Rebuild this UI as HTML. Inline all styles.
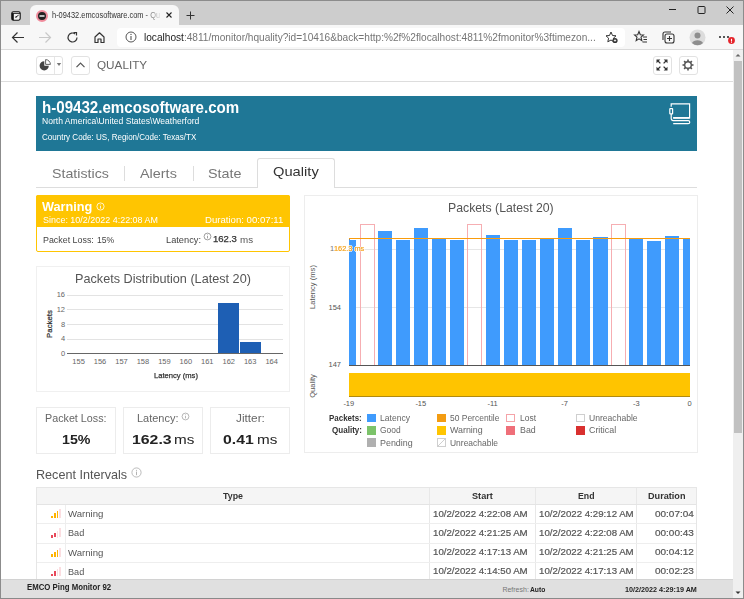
<!DOCTYPE html>
<html><head><meta charset="utf-8">
<style>
*{box-sizing:border-box;margin:0;padding:0}
html,body{width:744px;height:599px;overflow:hidden;background:#fff;font-family:"Liberation Sans",sans-serif;position:relative}
.a{position:absolute}
.t{position:absolute;white-space:nowrap;line-height:1;transform-origin:0 0}
</style></head><body>

<!-- window frame -->
<div class="a" style="left:0;top:0;width:744px;height:25px;background:#cdcdcd"></div>
<div class="a" style="left:0;top:0;width:744px;height:1px;background:#8c8c8c"></div>
<div class="a" style="left:0;top:0;width:1px;height:599px;background:#8c8c8c"></div>
<div class="a" style="left:743px;top:0;width:1px;height:599px;background:#8c8c8c"></div>
<!-- tab -->
<div class="a" style="left:30px;top:5px;width:149px;height:21px;background:#f7f7f7;border-radius:6px 6px 0 0"></div>
<svg class="a" style="left:10.5px;top:10.5px" width="10" height="10" viewBox="0 0 10 10"><rect x="0.8" y="0.8" width="8.4" height="8.4" rx="1.6" fill="#f2f2f2" stroke="#111" stroke-width="1.1"/><path d="M0.8 2.4H9.2" stroke="#111" stroke-width="0.9"/><rect x="0.8" y="2.4" width="2" height="6.8" fill="#111"/><path d="M4.6 6.2L7.6 4.2" stroke="#111" stroke-width="0.9"/><path d="M4.2 6.5L5.9 6.6L5.0 5.1Z" fill="#111"/></svg>
<svg class="a" style="left:36px;top:10px" width="12" height="12" viewBox="0 0 12 12"><circle cx="6" cy="6" r="5" fill="#222" stroke="#f08c9c" stroke-width="2"/><rect x="3.5" y="5.3" width="5" height="1.4" fill="#fff"/></svg>
<svg class="a" style="left:165.5px;top:12.2px" width="6" height="6" viewBox="0 0 6 6"><path d="M0.5 0.5L5.5 5.5M5.5 0.5L0.5 5.5" stroke="#222" stroke-width="1.1"/></svg>
<svg class="a" style="left:185.5px;top:10.5px" width="9" height="9" viewBox="0 0 9 9"><path d="M4.5 0.5V8.5M0.5 4.5H8.5" stroke="#333" stroke-width="1"/></svg>
<svg class="a" style="left:669px;top:4px" width="7" height="10" viewBox="0 0 7 10"><path d="M0 5.5H7" stroke="#222" stroke-width="1"/></svg>
<svg class="a" style="left:696.5px;top:6px" width="9" height="8" viewBox="0 0 9 8"><rect x="1" y="0.5" width="7" height="7" rx="0.8" fill="none" stroke="#222" stroke-width="1"/></svg>
<svg class="a" style="left:725.5px;top:6px" width="8" height="8" viewBox="0 0 8 8"><path d="M0.5 0.5L7.5 7.5M7.5 0.5L0.5 7.5" stroke="#222" stroke-width="1"/></svg>
<!-- toolbar -->
<div class="a" style="left:1px;top:25px;width:742px;height:24px;background:#f7f7f7"></div>
<div class="a" style="left:1px;top:49px;width:742px;height:1px;background:#dadada"></div>
<div class="a" style="left:117px;top:28px;width:508px;height:18.5px;background:#fff;border-radius:4px"></div>
<svg class="a" style="left:11px;top:31px" width="14" height="13" viewBox="0 0 14 13"><path d="M13 6.5H1.5M6.5 1.5L1.5 6.5L6.5 11.5" fill="none" stroke="#333" stroke-width="1.2"/></svg>
<svg class="a" style="left:38px;top:31px" width="14" height="13" viewBox="0 0 14 13"><path d="M1 6.5H12.5M7.5 1.5L12.5 6.5L7.5 11.5" fill="none" stroke="#c8c8c8" stroke-width="1.2"/></svg>
<svg class="a" style="left:66px;top:31px" width="13" height="13" viewBox="0 0 13 13"><path d="M11 6.5A4.5 4.5 0 1 1 9.2 2.9" fill="none" stroke="#333" stroke-width="1.2"/><path d="M7.5 1.5H10.5V4.5" fill="none" stroke="#333" stroke-width="1.2"/></svg>
<svg class="a" style="left:93px;top:31px" width="13" height="13" viewBox="0 0 13 13"><path d="M2 6L6.5 1.8L11 6V11.5H8V8H5V11.5H2Z" fill="none" stroke="#333" stroke-width="1.2" stroke-linejoin="round"/></svg>
<svg class="a" style="left:125px;top:31px" width="12" height="12" viewBox="0 0 12 12"><circle cx="6" cy="6" r="5" fill="none" stroke="#555" stroke-width="1"/><path d="M6 5V9" stroke="#555" stroke-width="1.1"/><circle cx="6" cy="3.4" r="0.7" fill="#555"/></svg>
<svg class="a" style="left:605px;top:31px" width="14" height="13" viewBox="0 0 14 13"><path d="M6 1L7.5 4.5L11 4.8L8.4 7.2L9.2 10.8L6 9L2.8 10.8L3.6 7.2L1 4.8L4.5 4.5Z" fill="none" stroke="#333" stroke-width="1"/><circle cx="10" cy="9.5" r="2.6" fill="#333"/><path d="M10 8.3V10.7M8.8 9.5H11.2" stroke="#fff" stroke-width="0.8"/></svg>
<svg class="a" style="left:633px;top:30px" width="15" height="14" viewBox="0 0 15 14"><path d="M6 1.5L7.3 4.7L10.5 5L8 7.2L8.8 10.6L6 8.8L3.2 10.6L4 7.2L1.5 5L4.7 4.7Z" fill="none" stroke="#333" stroke-width="1.1"/><path d="M10 7H14M10.5 9.5H14M9.5 12H14" stroke="#333" stroke-width="1"/></svg>
<svg class="a" style="left:661px;top:30px" width="15" height="15" viewBox="0 0 15 15"><rect x="4" y="4" width="9" height="9" rx="2" fill="none" stroke="#333" stroke-width="1.1"/><path d="M2 10V4A2 2 0 0 1 4 2H10" fill="none" stroke="#333" stroke-width="1.1"/><path d="M8.5 6V11M6 8.5H11" stroke="#333" stroke-width="1.1"/></svg>
<svg class="a" style="left:689px;top:29px" width="17" height="17" viewBox="0 0 17 17"><circle cx="8.5" cy="8.5" r="8" fill="#dcdcdc"/><circle cx="8.5" cy="6.5" r="3" fill="#8e8e8e"/><path d="M3 14A6 4.5 0 0 1 14 14A8 8 0 0 1 3 14Z" fill="#8e8e8e"/></svg>
<svg class="a" style="left:717px;top:32px" width="20" height="14" viewBox="0 0 20 14"><circle cx="3" cy="5" r="1" fill="#222"/><circle cx="7" cy="5" r="1" fill="#222"/><circle cx="11" cy="5" r="1" fill="#222"/><circle cx="14.5" cy="8.5" r="3.4" fill="#e5242b"/><path d="M14.5 6.8V9.6" stroke="#fff" stroke-width="1.1"/><circle cx="14.5" cy="10.6" r="0.5" fill="#fff"/></svg>

<!-- app toolbar -->
<div class="a" style="left:1px;top:81px;width:732px;height:1px;background:#dddddd"></div>
<div class="a" style="left:36px;top:56px;width:27px;height:18.5px;border:1px solid #e2e2e2;border-radius:3px"></div>
<div class="a" style="left:53.8px;top:57px;width:1px;height:16.5px;background:#e6e6e6"></div>
<svg class="a" style="left:38.3px;top:58px" width="14" height="14" viewBox="0 0 14 14"><path d="M6.3 3.2A4.6 4.6 0 1 0 10.8 7.7H6.3Z" fill="#444"/><path d="M7.6 1.6V6.4H12.4A4.8 4.8 0 0 0 7.6 1.6Z" fill="none" stroke="#555" stroke-width="0.9"/></svg>
<svg class="a" style="left:56px;top:62px" width="6" height="5" viewBox="0 0 6 5"><path d="M0.8 1H5.2L3 4Z" fill="#777"/></svg>
<div class="a" style="left:71px;top:56px;width:19px;height:18.5px;border:1px solid #e2e2e2;border-radius:3px"></div>
<svg class="a" style="left:75px;top:61px" width="11" height="8" viewBox="0 0 11 8"><path d="M1.5 6.2L5.5 2.2L9.5 6.2" fill="none" stroke="#555" stroke-width="1.2"/></svg>
<div class="a" style="left:652.5px;top:56px;width:19px;height:18.5px;border:1px solid #e2e2e2;border-radius:3px"></div>
<svg class="a" style="left:655px;top:58px" width="14" height="14" viewBox="0 0 14 14"><g fill="#333"><path d="M1.5 1.5H5.3L1.5 5.3Z"/><path d="M12.5 1.5H8.7L12.5 5.3Z"/><path d="M1.5 12.5H5.3L1.5 8.7Z"/><path d="M12.5 12.5H8.7L12.5 8.7Z"/></g><g stroke="#333" stroke-width="1.3"><path d="M3 3L5.4 5.4M11 3L8.6 5.4M3 11L5.4 8.6M11 11L8.6 8.6"/></g></svg>
<div class="a" style="left:678.5px;top:56px;width:19px;height:18.5px;border:1px solid #e2e2e2;border-radius:3px"></div>
<svg class="a" style="left:681px;top:58px" width="14" height="14" viewBox="0 0 14 14"><g fill="#555"><g transform="rotate(0 7 7)"><rect x="6.2" y="1.5" width="1.6" height="2.4"/><rect x="6.2" y="10.1" width="1.6" height="2.4"/></g><g transform="rotate(45 7 7)"><rect x="6.2" y="1.5" width="1.6" height="2.4"/><rect x="6.2" y="10.1" width="1.6" height="2.4"/></g><g transform="rotate(90 7 7)"><rect x="6.2" y="1.5" width="1.6" height="2.4"/><rect x="6.2" y="10.1" width="1.6" height="2.4"/></g><g transform="rotate(135 7 7)"><rect x="6.2" y="1.5" width="1.6" height="2.4"/><rect x="6.2" y="10.1" width="1.6" height="2.4"/></g></g><circle cx="7" cy="7" r="3.3" fill="none" stroke="#555" stroke-width="1.4"/></svg>

<!-- banner -->
<div class="a" style="left:36px;top:96px;width:661px;height:55px;background:#1f7796"></div>
<svg class="a" style="left:668px;top:102px" width="24" height="24" viewBox="0 0 24 24"><g fill="none" stroke="#fff" stroke-width="1.2"><path d="M3.2 4.8V1.8H21.6V15.9H5.2"/><path d="M3.2 12V16.6A2 2 0 0 0 5.2 18.6H20.2A1.55 1.55 0 0 1 20.2 21.7H5.2"/><rect x="1.8" y="6.6" width="2.8" height="5.2" rx="0.4"/></g><path d="M5.2 15.9H21.6" stroke="#fff" stroke-width="1.6"/></svg>

<!-- tabs -->
<div class="a" style="left:36px;top:187px;width:661px;height:1px;background:#dddddd"></div>
<div class="a" style="left:257px;top:158px;width:78px;height:30px;background:#fff;border:1px solid #dddddd;border-bottom:none;border-radius:3px 3px 0 0"></div>
<div class="a" style="left:124px;top:166px;width:1px;height:15px;background:#ddd"></div>
<div class="a" style="left:193px;top:166px;width:1px;height:15px;background:#ddd"></div>

<!-- warning box -->
<div class="a" style="left:36px;top:195px;width:254px;height:57px;border:1px solid #ffc501;border-radius:2px;background:#fff"></div>
<div class="a" style="left:36px;top:195px;width:254px;height:32px;background:#ffc501;border-radius:2px 2px 0 0"></div>

<!-- distribution chart box -->
<div class="a" style="left:36px;top:266px;width:254px;height:126px;border:1px solid #f0f0f0"></div>

<!-- stat boxes -->
<div class="a" style="left:36px;top:407px;width:80px;height:47px;border:1px solid #ececec"></div>
<div class="a" style="left:123px;top:407px;width:80px;height:47px;border:1px solid #ececec"></div>
<div class="a" style="left:210px;top:407px;width:80px;height:47px;border:1px solid #ececec"></div>

<!-- packets chart box -->
<div class="a" style="left:304px;top:195px;width:394px;height:258px;border:1px solid #ededed"></div>

<!-- recent intervals -->
<div class="a" style="left:36px;top:487px;width:661px;height:92px;border:1px solid #e6e6e6;border-bottom:none"></div>
<div class="a" style="left:37px;top:488px;width:659px;height:16px;background:#f5f5f5"></div>

<!-- status bar -->
<div class="a" style="left:1px;top:579px;width:732px;height:19px;background:#e0e0e0;border-top:1px solid #d2d2d2"></div>
<div class="a" style="left:0;top:597.5px;width:744px;height:1.5px;background:#8a8a8a"></div>
<!-- scrollbar -->
<div class="a" style="left:733px;top:50px;width:10px;height:548px;background:#efefef"></div>
<div class="a" style="left:734px;top:60.5px;width:8px;height:372px;background:#c1c1c1"></div>

<svg class="a" style="left:96px;top:202px" width="9" height="9" viewBox="0 0 9 9"><circle cx="4.5" cy="4.5" r="3.6" fill="none" stroke="#fff" stroke-width="0.8"/><path d="M4.5 3.8V6.6" stroke="#fff" stroke-width="0.8"/><circle cx="4.5" cy="2.7" r="0.45" fill="#fff"/></svg>
<svg class="a" style="left:202.5px;top:232px" width="9" height="9" viewBox="0 0 9 9"><circle cx="4.5" cy="4.5" r="3.4" fill="none" stroke="#777" stroke-width="0.7"/><path d="M4.5 3.8V6.4" stroke="#777" stroke-width="0.7"/><circle cx="4.5" cy="2.7" r="0.4" fill="#777"/></svg>
<svg class="a" style="left:181px;top:412px" width="9" height="9" viewBox="0 0 9 9"><circle cx="4.5" cy="4.5" r="3.4" fill="none" stroke="#999" stroke-width="0.7"/><path d="M4.5 3.8V6.4" stroke="#999" stroke-width="0.7"/><circle cx="4.5" cy="2.7" r="0.4" fill="#999"/></svg>
<svg class="a" style="left:131px;top:467px" width="11" height="11" viewBox="0 0 11 11"><circle cx="5.5" cy="5.5" r="4.6" fill="none" stroke="#aaa" stroke-width="0.8"/><path d="M5.5 4.6V8.2" stroke="#aaa" stroke-width="0.9"/><circle cx="5.5" cy="3.2" r="0.55" fill="#aaa"/></svg>
<svg class="a" style="left:734px;top:51px" width="8" height="8" viewBox="0 0 8 8"><path d="M1.5 5.5L4 3L6.5 5.5Z" fill="#666"/></svg>
<svg class="a" style="left:734px;top:588.5px" width="8" height="8" viewBox="0 0 8 8"><path d="M1.5 2.5L4 5L6.5 2.5Z" fill="#333"/></svg>
<div class="a" style="left:67.40px;top:294.50px;width:215.30px;height:1.00px;background:#e3e3e3"></div>
<div class="a" style="left:67.40px;top:309.30px;width:215.30px;height:1.00px;background:#e3e3e3"></div>
<div class="a" style="left:67.40px;top:323.80px;width:215.30px;height:1.00px;background:#e3e3e3"></div>
<div class="a" style="left:67.40px;top:338.50px;width:215.30px;height:1.00px;background:#e3e3e3"></div>
<div class="a" style="left:67.40px;top:353.00px;width:215.30px;height:1.30px;background:#666"></div>
<div class="a" style="left:218.40px;top:302.60px;width:21.00px;height:50.60px;background:#1e5fb4"></div>
<div class="a" style="left:239.80px;top:342.20px;width:21.40px;height:11.00px;background:#1e5fb4"></div>
<div class="t" style="left:50px;top:324px;font-size:7.8px;font-weight:normal;color:#333;-webkit-text-stroke:0.25px #333;transform:translate(-50%,-50%) rotate(-90deg);transform-origin:50% 50%">Packets</div>
<div class="a" style="left:349.20px;top:249.30px;width:341.00px;height:1.00px;background:#e6e6e6"></div>
<div class="a" style="left:349.20px;top:306.90px;width:341.00px;height:1.00px;background:#e6e6e6"></div>
<div class="a" style="left:349.20px;top:240.40px;width:7.05px;height:124.80px;background:#3f9bfd"></div>
<div class="a" style="left:360.00px;top:224.00px;width:15.00px;height:141.20px;border:1px solid #f6aeb2;border-bottom:none"></div>
<div class="a" style="left:378.05px;top:231.20px;width:14.10px;height:134.00px;background:#3f9bfd"></div>
<div class="a" style="left:396.00px;top:240.40px;width:14.10px;height:124.80px;background:#3f9bfd"></div>
<div class="a" style="left:413.95px;top:228.00px;width:14.10px;height:137.20px;background:#3f9bfd"></div>
<div class="a" style="left:431.90px;top:239.20px;width:14.10px;height:126.00px;background:#3f9bfd"></div>
<div class="a" style="left:449.85px;top:240.40px;width:14.10px;height:124.80px;background:#3f9bfd"></div>
<div class="a" style="left:467.00px;top:224.00px;width:15.00px;height:141.20px;border:1px solid #f6aeb2;border-bottom:none"></div>
<div class="a" style="left:485.75px;top:235.00px;width:14.10px;height:130.20px;background:#3f9bfd"></div>
<div class="a" style="left:503.70px;top:240.00px;width:14.10px;height:125.20px;background:#3f9bfd"></div>
<div class="a" style="left:521.65px;top:240.00px;width:14.10px;height:125.20px;background:#3f9bfd"></div>
<div class="a" style="left:539.60px;top:238.70px;width:14.10px;height:126.50px;background:#3f9bfd"></div>
<div class="a" style="left:557.55px;top:227.60px;width:14.10px;height:137.60px;background:#3f9bfd"></div>
<div class="a" style="left:575.50px;top:239.70px;width:14.10px;height:125.50px;background:#3f9bfd"></div>
<div class="a" style="left:593.45px;top:236.60px;width:14.10px;height:128.60px;background:#3f9bfd"></div>
<div class="a" style="left:611.00px;top:224.00px;width:15.00px;height:141.20px;border:1px solid #f6aeb2;border-bottom:none"></div>
<div class="a" style="left:629.35px;top:239.00px;width:14.10px;height:126.20px;background:#3f9bfd"></div>
<div class="a" style="left:647.30px;top:240.80px;width:14.10px;height:124.40px;background:#3f9bfd"></div>
<div class="a" style="left:665.25px;top:235.70px;width:14.10px;height:129.50px;background:#3f9bfd"></div>
<div class="a" style="left:683.20px;top:238.70px;width:7.10px;height:126.50px;background:#3f9bfd"></div>
<div class="a" style="left:348.70px;top:238.00px;width:1.00px;height:2.00px;background:#888"></div>
<div class="a" style="left:349.20px;top:365.20px;width:341.10px;height:1.00px;background:#555"></div>
<div class="a" style="left:349.20px;top:237.50px;width:341.10px;height:1.80px;background:#f99c0c"></div>
<div class="a" style="left:349.20px;top:373.00px;width:341.10px;height:24.00px;background:#ffc400"></div>
<div class="a" style="left:349.20px;top:396.40px;width:341.10px;height:1.00px;background:#b08a10"></div>
<div class="t" style="left:312.8px;top:287px;font-size:7.6px;color:#555;transform:translate(-50%,-50%) rotate(-90deg);transform-origin:50% 50%">Latency (ms)</div>
<div class="t" style="left:312.8px;top:385.8px;font-size:7.6px;color:#555;transform:translate(-50%,-50%) rotate(-90deg);transform-origin:50% 50%">Quality</div>
<div class="a" style="left:367.00px;top:413.70px;width:9.00px;height:8.80px;background:#3f9bfd"></div>
<div class="a" style="left:437.00px;top:413.70px;width:9.00px;height:8.80px;background:#f39c12"></div>
<div class="a" style="left:506.30px;top:413.70px;width:9.00px;height:8.80px;border:1px solid #f5a3a8;background:#fff"></div>
<div class="a" style="left:576.40px;top:413.70px;width:9.00px;height:8.80px;border:1px solid #cfcfcf;background:#fff"></div>
<div class="a" style="left:367.00px;top:425.90px;width:9.00px;height:8.80px;background:#7cc36a"></div>
<div class="a" style="left:437.00px;top:425.90px;width:9.00px;height:8.80px;background:#ffc501"></div>
<div class="a" style="left:506.30px;top:425.90px;width:9.00px;height:8.80px;background:#ef6f79"></div>
<div class="a" style="left:576.40px;top:425.90px;width:9.00px;height:8.80px;background:#d9302f"></div>
<div class="a" style="left:367.00px;top:438.30px;width:9.00px;height:8.80px;background:#b0b0b0"></div>
<svg class="a" style="left:437px;top:438.3px" width="9" height="9" viewBox="0 0 9 9"><rect x="0.5" y="0.5" width="8" height="8" fill="#fff" stroke="#cfcfcf"/><path d="M1 8L8 1" stroke="#cfcfcf"/></svg>
<div class="a" style="left:429.00px;top:488.00px;width:1.00px;height:91.00px;background:#e8e8e8"></div>
<div class="a" style="left:535.30px;top:488.00px;width:1.00px;height:91.00px;background:#e8e8e8"></div>
<div class="a" style="left:636.40px;top:488.00px;width:1.00px;height:91.00px;background:#e8e8e8"></div>
<div class="a" style="left:64.60px;top:504.00px;width:1.00px;height:75.00px;background:#eeeeee"></div>
<div class="a" style="left:37.00px;top:503.60px;width:659.00px;height:1.00px;background:#e4e4e4"></div>
<div class="a" style="left:37.00px;top:523.40px;width:659.00px;height:1.00px;background:#eeeeee"></div>
<div class="a" style="left:37.00px;top:542.80px;width:659.00px;height:1.00px;background:#eeeeee"></div>
<div class="a" style="left:37.00px;top:562.20px;width:659.00px;height:1.00px;background:#eeeeee"></div>
<div class="a" style="left:51.30px;top:515.70px;width:1.70px;height:2.50px;background:#ffb300"></div>
<div class="a" style="left:53.90px;top:513.40px;width:1.70px;height:4.80px;background:#ffb300"></div>
<div class="a" style="left:56.50px;top:511.20px;width:1.70px;height:7.00px;background:#ffb300"></div>
<div class="a" style="left:59.10px;top:509.00px;width:1.70px;height:9.20px;background:#fbdde0"></div>
<div class="a" style="left:51.30px;top:535.00px;width:1.70px;height:2.50px;background:#e8485a"></div>
<div class="a" style="left:53.90px;top:532.70px;width:1.70px;height:4.80px;background:#e8485a"></div>
<div class="a" style="left:56.50px;top:530.50px;width:1.70px;height:7.00px;background:#fbdde0"></div>
<div class="a" style="left:59.10px;top:528.30px;width:1.70px;height:9.20px;background:#fbdde0"></div>
<div class="a" style="left:51.30px;top:554.30px;width:1.70px;height:2.50px;background:#ffb300"></div>
<div class="a" style="left:53.90px;top:552.00px;width:1.70px;height:4.80px;background:#ffb300"></div>
<div class="a" style="left:56.50px;top:549.80px;width:1.70px;height:7.00px;background:#ffb300"></div>
<div class="a" style="left:59.10px;top:547.60px;width:1.70px;height:9.20px;background:#fbdde0"></div>
<div class="a" style="left:51.30px;top:573.60px;width:1.70px;height:2.50px;background:#e8485a"></div>
<div class="a" style="left:53.90px;top:571.30px;width:1.70px;height:4.80px;background:#e8485a"></div>
<div class="a" style="left:56.50px;top:569.10px;width:1.70px;height:7.00px;background:#fbdde0"></div>
<div class="a" style="left:59.10px;top:566.90px;width:1.70px;height:9.20px;background:#fbdde0"></div>
<div class="t" style="left:52.48px;top:11.46px;font-size:8.6px;font-weight:normal;color:#333;transform:scaleX(0.8632);-webkit-mask-image:linear-gradient(90deg,#000 85%,rgba(0,0,0,0.15));">h-09432.emcosoftware.com - Qu</div>
<div class="t" style="left:144.39px;top:32.93px;font-size:10.2px;font-weight:normal;color:#757575;transform:scaleX(0.9929);"><span style="color:#1a1a1a">localhost</span>:4811/monitor/hquality?id=10416&amp;back=http:%2f%2flocalhost:4811%2fmonitor%3ftimezon...</div>
<div class="t" style="left:96.52px;top:59.54px;font-size:11.4px;font-weight:normal;color:#666;transform:scaleX(1.0291);">QUALITY</div>
<div class="t" style="left:41.74px;top:100.42px;font-size:16px;font-weight:bold;color:#fff;transform:scaleX(0.9437);">h-09432.emcosoftware.com</div>
<div class="t" style="left:42.17px;top:116.70px;font-size:8.8px;font-weight:normal;color:#fff;transform:scaleX(0.9732);">North America\United States\Weatherford</div>
<div class="t" style="left:42.18px;top:132.56px;font-size:8.6px;font-weight:normal;color:#fff;transform:scaleX(0.9346);">Country Code: US, Region/Code: Texas/TX</div>
<div class="t" style="left:51.78px;top:166.71px;font-size:13.6px;font-weight:normal;color:#777;transform:scaleX(1.0449);">Statistics</div>
<div class="t" style="left:139.98px;top:166.71px;font-size:13.6px;font-weight:normal;color:#777;transform:scaleX(1.0599);">Alerts</div>
<div class="t" style="left:208.18px;top:166.71px;font-size:13.6px;font-weight:normal;color:#777;transform:scaleX(1.0561);">State</div>
<div class="t" style="left:272.68px;top:164.91px;font-size:13.6px;font-weight:normal;color:#333;transform:scaleX(1.0808);">Quality</div>
<div class="t" style="left:42.36px;top:200.79px;font-size:12.3px;font-weight:bold;color:#fff;transform:scaleX(1.0337);">Warning</div>
<div class="t" style="left:42.56px;top:215.73px;font-size:9px;font-weight:normal;color:#fff;transform:scaleX(0.9947);">Since: 10/2/2022 4:22:08 AM</div>
<div class="t" style="left:204.66px;top:215.73px;font-size:9px;font-weight:normal;color:#fff;transform:scaleX(1.0666);">Duration: 00:07:11</div>
<div class="t" style="left:42.57px;top:235.50px;font-size:8.8px;font-weight:normal;color:#444;transform:scaleX(1.0095);">Packet Loss:</div>
<div class="t" style="left:97.27px;top:235.50px;font-size:8.8px;font-weight:normal;color:#444;transform:scaleX(0.9799);">15%</div>
<div class="t" style="left:166.07px;top:235.50px;font-size:8.8px;font-weight:normal;color:#444;transform:scaleX(1.0508);">Latency:</div>
<div class="t" style="left:213.46px;top:235.33px;font-size:9px;font-weight:normal;color:#333;transform:scaleX(1.0599);-webkit-text-stroke:0.25px #333;">162.3</div>
<div class="t" style="left:240.07px;top:235.50px;font-size:8.8px;font-weight:normal;color:#555;transform:scaleX(1.1126);">ms</div>
<div class="t" style="left:74.84px;top:272.94px;font-size:12.6px;font-weight:normal;color:#555;transform:scaleX(1.0052);">Packets Distribution (Latest 20)</div>
<div class="t" style="left:56.71px;top:291.38px;font-size:7.5px;font-weight:normal;color:#666;">16</div>
<div class="t" style="left:56.71px;top:306.18px;font-size:7.5px;font-weight:normal;color:#666;">12</div>
<div class="t" style="left:60.88px;top:320.68px;font-size:7.5px;font-weight:normal;color:#666;">8</div>
<div class="t" style="left:60.88px;top:335.38px;font-size:7.5px;font-weight:normal;color:#666;">4</div>
<div class="t" style="left:60.88px;top:349.88px;font-size:7.5px;font-weight:normal;color:#666;">0</div>
<div class="t" style="left:72.34px;top:358.38px;font-size:7.5px;font-weight:normal;color:#666;">155</div>
<div class="t" style="left:93.79px;top:358.38px;font-size:7.5px;font-weight:normal;color:#666;">156</div>
<div class="t" style="left:115.24px;top:358.38px;font-size:7.5px;font-weight:normal;color:#666;">157</div>
<div class="t" style="left:136.69px;top:358.38px;font-size:7.5px;font-weight:normal;color:#666;">158</div>
<div class="t" style="left:158.14px;top:358.38px;font-size:7.5px;font-weight:normal;color:#666;">159</div>
<div class="t" style="left:179.59px;top:358.38px;font-size:7.5px;font-weight:normal;color:#666;">160</div>
<div class="t" style="left:201.04px;top:358.38px;font-size:7.5px;font-weight:normal;color:#666;">161</div>
<div class="t" style="left:222.49px;top:358.38px;font-size:7.5px;font-weight:normal;color:#666;">162</div>
<div class="t" style="left:243.94px;top:358.38px;font-size:7.5px;font-weight:normal;color:#666;">163</div>
<div class="t" style="left:265.39px;top:358.38px;font-size:7.5px;font-weight:normal;color:#666;">164</div>
<div class="t" style="left:153.53px;top:372.03px;font-size:7.8px;font-weight:normal;color:#333;transform:scaleX(0.9750);-webkit-text-stroke:0.25px #333;">Latency (ms)</div>
<div class="t" style="left:45.39px;top:414.13px;font-size:10.2px;font-weight:normal;color:#666;transform:scaleX(1.0548);">Packet Loss:</div>
<div class="t" style="left:62.22px;top:432.91px;font-size:13px;font-weight:bold;color:#222;transform:scaleX(1.0933);">15%</div>
<div class="t" style="left:137.19px;top:414.13px;font-size:10.2px;font-weight:normal;color:#666;transform:scaleX(1.0755);">Latency:</div>
<div class="t" style="left:131.92px;top:432.91px;font-size:13px;font-weight:bold;color:#222;transform:scaleX(1.2186);">162.3</div>
<div class="t" style="left:174.42px;top:432.91px;font-size:13px;font-weight:normal;color:#222;transform:scaleX(1.1739);">ms</div>
<div class="t" style="left:235.69px;top:414.13px;font-size:10.2px;font-weight:normal;color:#666;transform:scaleX(1.1606);">Jitter:</div>
<div class="t" style="left:222.82px;top:432.91px;font-size:13px;font-weight:bold;color:#222;transform:scaleX(1.2113);">0.41</div>
<div class="t" style="left:256.82px;top:432.91px;font-size:13px;font-weight:normal;color:#222;transform:scaleX(1.1739);">ms</div>
<div class="t" style="left:448.04px;top:202.34px;font-size:12.6px;font-weight:normal;color:#555;transform:scaleX(0.9743);">Packets (Latest 20)</div>
<div class="t" style="left:328.53px;top:303.77px;font-size:7.5px;font-weight:normal;color:#555;">154</div>
<div class="t" style="left:328.53px;top:361.38px;font-size:7.5px;font-weight:normal;color:#555;">147</div>
<div class="t" style="left:329.88px;top:245.28px;font-size:7.5px;font-weight:normal;color:#777;">1</div>
<div class="t" style="left:334.23px;top:245.03px;font-size:7.8px;font-weight:normal;color:#f5a21a;transform:scaleX(0.9426);text-shadow:-0.8px 0 #fff,0.8px 0 #fff,0 -0.8px #fff,0 0.8px #fff;-webkit-text-stroke:0.2px #f5a21a;">162.3 ms</div>
<div class="t" style="left:343.38px;top:400.27px;font-size:7.5px;font-weight:normal;color:#555;">-19</div>
<div class="t" style="left:415.38px;top:400.27px;font-size:7.5px;font-weight:normal;color:#555;">-15</div>
<div class="t" style="left:487.45px;top:400.27px;font-size:7.5px;font-weight:normal;color:#555;">-11</div>
<div class="t" style="left:561.26px;top:400.27px;font-size:7.5px;font-weight:normal;color:#555;">-7</div>
<div class="t" style="left:632.96px;top:400.27px;font-size:7.5px;font-weight:normal;color:#555;">-3</div>
<div class="t" style="left:687.51px;top:400.27px;font-size:7.5px;font-weight:normal;color:#555;">0</div>
<div class="t" style="left:328.90px;top:413.93px;font-size:8.4px;font-weight:bold;color:#333;transform:scaleX(0.9493);">Packets:</div>
<div class="t" style="left:331.60px;top:426.13px;font-size:8.4px;font-weight:bold;color:#333;transform:scaleX(0.9622);">Quality:</div>
<div class="t" style="left:380.00px;top:413.93px;font-size:8.4px;font-weight:normal;color:#666;transform:scaleX(1.0226);">Latency</div>
<div class="t" style="left:449.90px;top:413.93px;font-size:8.4px;font-weight:normal;color:#666;transform:scaleX(1.0106);">50 Percentile</div>
<div class="t" style="left:519.50px;top:413.93px;font-size:8.4px;font-weight:normal;color:#666;transform:scaleX(1.0104);">Lost</div>
<div class="t" style="left:588.80px;top:413.93px;font-size:8.4px;font-weight:normal;color:#666;transform:scaleX(1.0233);">Unreachable</div>
<div class="t" style="left:380.00px;top:426.13px;font-size:8.4px;font-weight:normal;color:#666;transform:scaleX(1.0053);">Good</div>
<div class="t" style="left:449.90px;top:426.13px;font-size:8.4px;font-weight:normal;color:#666;transform:scaleX(1.0594);">Warning</div>
<div class="t" style="left:519.50px;top:426.13px;font-size:8.4px;font-weight:normal;color:#666;transform:scaleX(1.0538);">Bad</div>
<div class="t" style="left:588.80px;top:426.13px;font-size:8.4px;font-weight:normal;color:#666;transform:scaleX(1.0592);">Critical</div>
<div class="t" style="left:380.00px;top:438.53px;font-size:8.4px;font-weight:normal;color:#666;transform:scaleX(1.0637);">Pending</div>
<div class="t" style="left:449.90px;top:438.53px;font-size:8.4px;font-weight:normal;color:#666;transform:scaleX(1.0107);">Unreachable</div>
<div class="t" style="left:35.72px;top:467.71px;font-size:13px;font-weight:normal;color:#555;transform:scaleX(0.9694);">Recent Intervals</div>
<div class="t" style="left:223.00px;top:491.93px;font-size:8.4px;font-weight:bold;color:#333;transform:scaleX(1.0565);">Type</div>
<div class="t" style="left:472.00px;top:491.93px;font-size:8.4px;font-weight:bold;color:#333;transform:scaleX(1.0898);">Start</div>
<div class="t" style="left:577.80px;top:491.93px;font-size:8.4px;font-weight:bold;color:#333;transform:scaleX(1.0430);">End</div>
<div class="t" style="left:648.30px;top:491.93px;font-size:8.4px;font-weight:bold;color:#333;transform:scaleX(1.0892);">Duration</div>
<div class="t" style="left:68.18px;top:510.08px;font-size:8.7px;font-weight:normal;color:#555;transform:scaleX(1.1034);">Warning</div>
<div class="t" style="left:432.75px;top:509.55px;font-size:9.1px;font-weight:normal;color:#555;transform:scaleX(1.0640);-webkit-text-stroke:0.2px #555;">10/2/2022 4:22:08 AM</div>
<div class="t" style="left:539.05px;top:509.55px;font-size:9.1px;font-weight:normal;color:#555;transform:scaleX(1.0640);-webkit-text-stroke:0.2px #555;">10/2/2022 4:29:12 AM</div>
<div class="t" style="left:655.15px;top:509.55px;font-size:9.1px;font-weight:normal;color:#555;transform:scaleX(1.0956);-webkit-text-stroke:0.2px #555;">00:07:04</div>
<div class="t" style="left:68.18px;top:529.38px;font-size:8.7px;font-weight:normal;color:#555;transform:scaleX(1.0501);">Bad</div>
<div class="t" style="left:432.75px;top:528.85px;font-size:9.1px;font-weight:normal;color:#555;transform:scaleX(1.0640);-webkit-text-stroke:0.2px #555;">10/2/2022 4:21:25 AM</div>
<div class="t" style="left:539.05px;top:528.85px;font-size:9.1px;font-weight:normal;color:#555;transform:scaleX(1.0640);-webkit-text-stroke:0.2px #555;">10/2/2022 4:22:08 AM</div>
<div class="t" style="left:655.15px;top:528.85px;font-size:9.1px;font-weight:normal;color:#555;transform:scaleX(1.0956);-webkit-text-stroke:0.2px #555;">00:00:43</div>
<div class="t" style="left:68.18px;top:548.68px;font-size:8.7px;font-weight:normal;color:#555;transform:scaleX(1.1034);">Warning</div>
<div class="t" style="left:432.75px;top:548.15px;font-size:9.1px;font-weight:normal;color:#555;transform:scaleX(1.0640);-webkit-text-stroke:0.2px #555;">10/2/2022 4:17:13 AM</div>
<div class="t" style="left:539.05px;top:548.15px;font-size:9.1px;font-weight:normal;color:#555;transform:scaleX(1.0640);-webkit-text-stroke:0.2px #555;">10/2/2022 4:21:25 AM</div>
<div class="t" style="left:655.15px;top:548.15px;font-size:9.1px;font-weight:normal;color:#555;transform:scaleX(1.0956);-webkit-text-stroke:0.2px #555;">00:04:12</div>
<div class="t" style="left:68.18px;top:567.98px;font-size:8.7px;font-weight:normal;color:#555;transform:scaleX(1.0501);">Bad</div>
<div class="t" style="left:432.75px;top:567.45px;font-size:9.1px;font-weight:normal;color:#555;transform:scaleX(1.0640);-webkit-text-stroke:0.2px #555;">10/2/2022 4:14:50 AM</div>
<div class="t" style="left:539.05px;top:567.45px;font-size:9.1px;font-weight:normal;color:#555;transform:scaleX(1.0640);-webkit-text-stroke:0.2px #555;">10/2/2022 4:17:13 AM</div>
<div class="t" style="left:655.15px;top:567.45px;font-size:9.1px;font-weight:normal;color:#555;transform:scaleX(1.0956);-webkit-text-stroke:0.2px #555;">00:02:23</div>
<div class="t" style="left:27.41px;top:584.19px;font-size:8.2px;font-weight:bold;color:#222;transform:scaleX(0.9528);">EMCO Ping Monitor 92</div>
<div class="t" style="left:502.38px;top:586.49px;font-size:7px;font-weight:normal;color:#777;">Refresh:</div>
<div class="t" style="left:529.58px;top:586.49px;font-size:7px;font-weight:bold;color:#222;transform:scaleX(0.9616);">Auto</div>
<div class="t" style="left:625.36px;top:586.16px;font-size:7.4px;font-weight:bold;color:#222;transform:scaleX(0.9756);">10/2/2022 4:29:19 AM</div>
</body></html>
